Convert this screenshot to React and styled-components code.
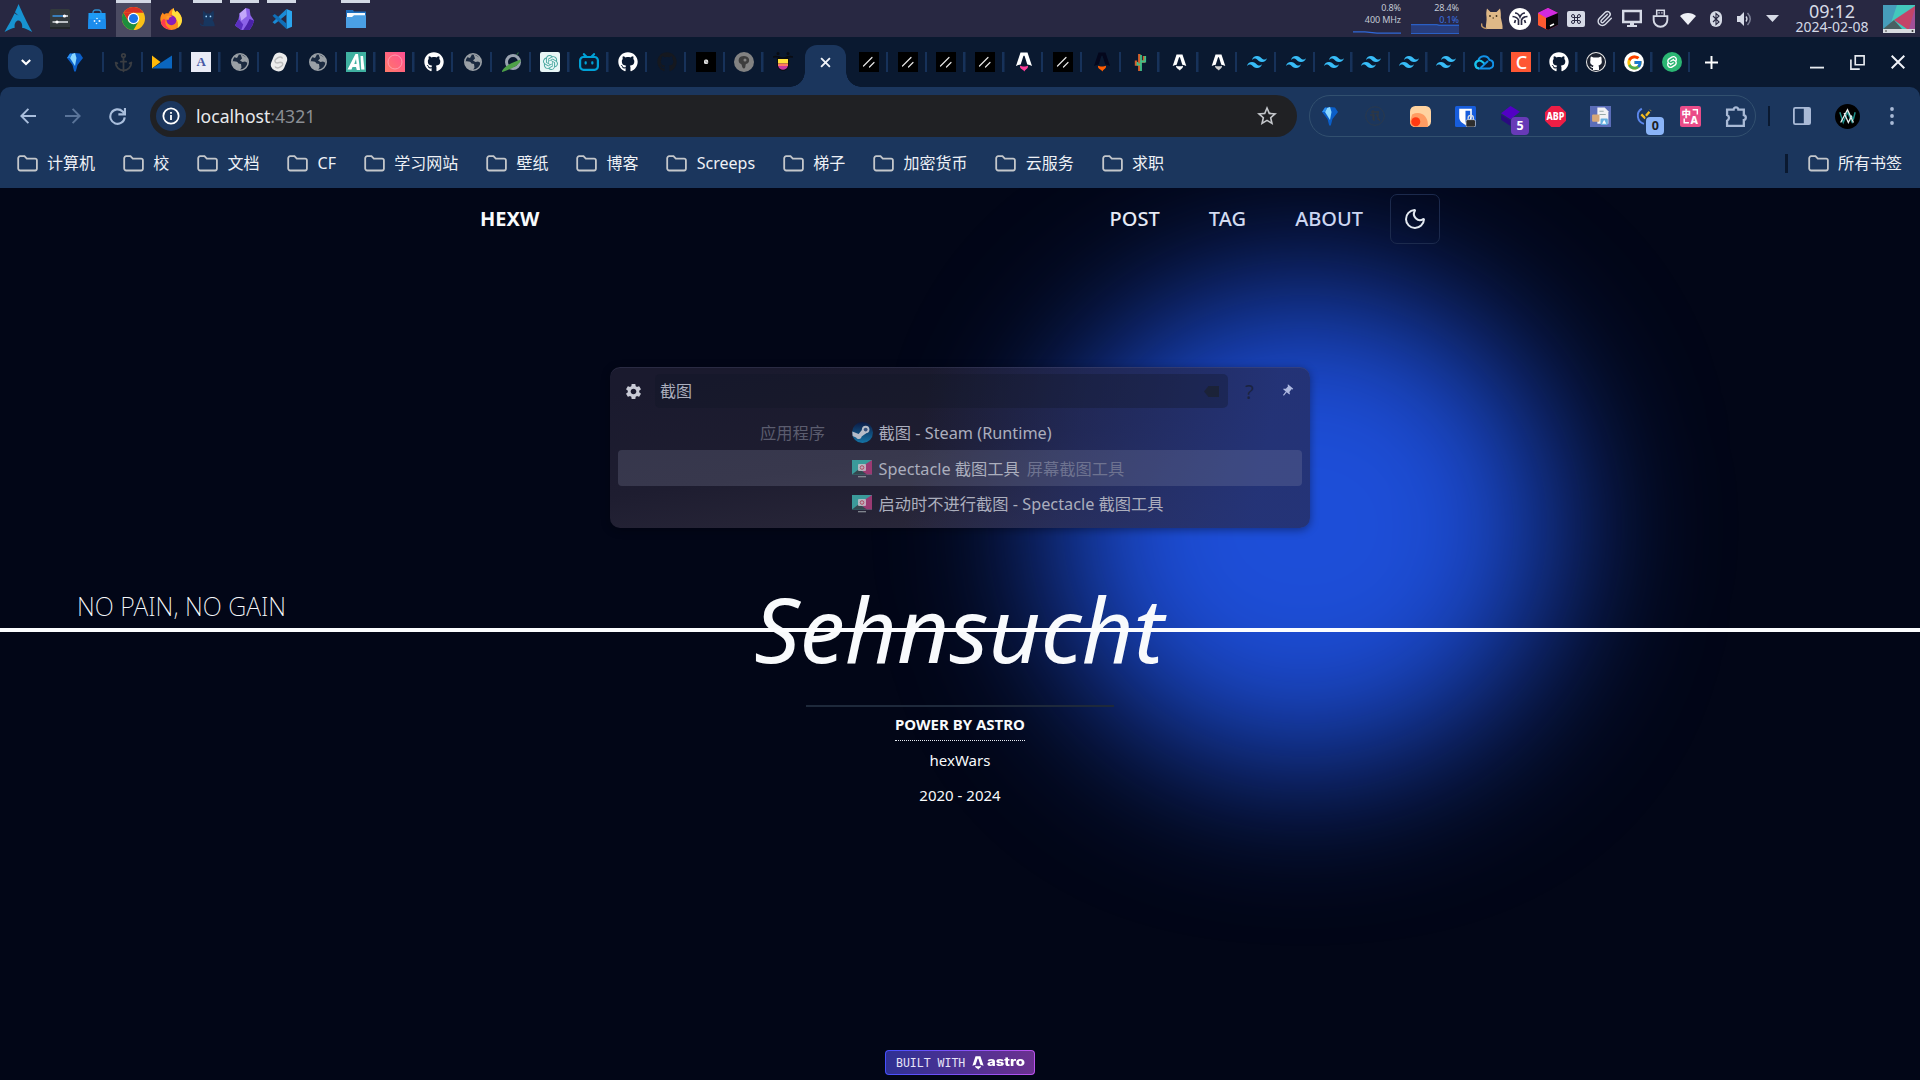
import React from "react";
import styled, { createGlobalStyle, css } from "styled-components";
import { FaGithub } from "react-icons/fa";
import { SiTailwindcss, SiSvelte, SiBilibili, SiOpenai } from "react-icons/si";
import { FcGoogle } from "react-icons/fc";
import { MdStarBorder, MdSettings, MdPushPin } from "react-icons/md";
import { Anchor, Moon, Paperclip, Command } from "lucide-react";

const sans = `"Noto Sans", "Noto Sans CJK SC", sans-serif`;

const Reset = createGlobalStyle`
  * { box-sizing: border-box; }
  body { margin: 0; background: #020617; font-family: ${sans}; }
  svg { display: block; flex: none; }
`;

const Desktop = styled.div`
  position: relative;
  width: 1920px;
  height: 1080px;
  overflow: hidden;
  display: flex;
  flex-direction: column;
`;

/* ---------- desktop panel ---------- */
const Panel = styled.header`
  height: 37px;
  flex: none;
  display: flex;
  align-items: stretch;
  background: #282842;
  color: #d3dae3;
`;
const Launcher = styled.div`
  width: 41px;
  padding-left: 4px;
  display: flex;
  align-items: center;
`;
const Task = styled.div`
  width: 37px;
  display: flex;
  justify-content: center;
  background: linear-gradient(#d3d9e5, #d3d9e5) center top / ${(p) => (p.$active ? 35 : p.$open ? 29 : 0)}px 3px no-repeat,
    linear-gradient(#4b4b62, #4b4b62) center / ${(p) => (p.$active ? 35 : 0)}px 100% no-repeat;
  align-items: center;
`;
const Spacer = styled.div`
  flex: 1;
`;
const Monitor = styled.div`
  width: 58px;
  display: flex;
  flex-direction: column;
  align-items: flex-end;
  padding-top: 2px;
  font-size: 9px;
  line-height: 12px;
  letter-spacing: -0.1px;
  color: #c3c8d4;
  position: relative;
  white-space: nowrap;
  svg { position: absolute; right: 0; bottom: 3px; z-index: 0; }
`;
const Reading = styled.span`
  position: relative;
  z-index: 1;
  color: ${(p) => p.$color || "inherit"};
`;
const Tray = styled.div`
  display: flex;
  margin-left: 19px;
`;
const TrayItem = styled.div`
  width: 28px;
  display: flex;
  align-items: center;
  justify-content: center;
`;
const Clock = styled.div`
  width: 92px;
  display: flex;
  flex-direction: column;
  align-items: center;
  padding-top: 2px;
  color: #d5dae6;
  white-space: nowrap;
`;
const Time = styled.span`
  font-size: 18px;
  line-height: 19px;
`;
const Day = styled.span`
  font-size: 14px;
  line-height: 12px;
`;
const Pager = styled.div`
  width: 42px;
  padding-left: 5px;
  display: flex;
  align-items: center;
`;

/* ---------- browser chrome ---------- */
const TabStrip = styled.div`
  height: 50px;
  flex: none;
  display: flex;
  background: #0a1930;
  padding: 0 1px 0 8px;
`;
const TabSearch = styled.button`
  width: 35px;
  height: 34px;
  margin: 8px 3px 0 0;
  padding: 0;
  border: 0;
  border-radius: 12px;
  background: #1b365d;
  display: flex;
  align-items: center;
  justify-content: center;
`;
const Tab = styled.div`
  width: ${(p) => p.$w}px;
  flex: none;
  display: flex;
  align-items: center;
  justify-content: center;
  background: ${(p) => (p.$bare ? "none" : "linear-gradient(#17325a, #17325a) right 15px / 2.5px 20px no-repeat")};
`;
const ActiveTab = styled.div`
  position: relative;
  width: 46.8px;
  flex: none;
  padding: 7.5px 3.4px 0 2.4px;
  &::before, &::after {
    content: "";
    position: absolute;
    bottom: 0;
    width: 15px;
    height: 15px;
  }
  &::before { left: -12.5px; background: radial-gradient(circle at 0 0, transparent 14.5px, #1b365d 15px); }
  &::after { right: -11.5px; background: radial-gradient(circle at 100% 0, transparent 14.5px, #1b365d 15px); }
`;
const ActiveBody = styled.div`
  height: 100%;
  border-radius: 12px 12px 0 0;
  background: #1b365d;
  display: flex;
  align-items: flex-start;
  justify-content: center;
  padding-top: 12px;
`;
const WindowButton = styled.div`
  width: ${(p) => p.$w || 40}px;
  display: flex;
  align-items: center;
  justify-content: center;
`;
const Toolbar = styled.div`
  height: 58px;
  flex: none;
  display: flex;
  align-items: center;
  background: #1b365d;
  border-radius: 10px 10px 0 0;
  padding-left: 5px;
`;
const ToolbarBack = styled.div`
  background: #0a1930;
  flex: none;
`;
const NavButton = styled.div`
  width: 45px;
  display: flex;
  justify-content: center;
`;
const Omnibox = styled.div`
  width: 1147px;
  height: 42px;
  margin-left: 10px;
  border-radius: 21px;
  background: #202124;
  display: flex;
  align-items: center;
  padding: 0 18px 0 6px;
`;
const SiteInfo = styled.div`
  width: 30px;
  height: 30px;
  border-radius: 50%;
  background: #1b365d;
  display: flex;
  align-items: center;
  justify-content: center;
`;
const Address = styled.div`
  flex: 1;
  padding: 0 0 0 10px;
  font-size: 17.6px;
  line-height: 24px;
  color: #e8eaed;
`;
const Port = styled.span`
  color: #8b8f94;
`;
const Extensions = styled.div`
  width: 447px;
  height: 42px;
  margin-left: 12px;
  border: 1.5px solid #32506f;
  border-radius: 21px;
  display: flex;
  align-items: center;
  flex: none;
`;
const Extension = styled.div`
  width: 45.1px;
  margin-left: ${(p) => (p.$first ? "-2.4px" : "0")};
  height: 28px;
  flex: none;
  display: flex;
  align-items: center;
  justify-content: center;
  position: relative;
`;
const Badge = styled.span`
  position: absolute;
  left: 23px;
  top: 15px;
  width: 18px;
  height: 18px;
  border-radius: 4px;
  background: ${(p) => p.$bg};
  color: ${(p) => p.$fg};
  font-size: 12.5px;
  font-weight: 700;
  line-height: 18px;
  text-align: center;
`;
const ToolDivider = styled.div`
  width: 2px;
  height: 20px;
  margin-left: 12px;
  background: #0a1930;
`;
const ToolItem = styled.div`
  width: 45px;
  margin-left: ${(p) => p.$ml || 0}px;
  display: flex;
  justify-content: center;
`;
const Avatar = styled.div`
  width: 25px;
  height: 25px;
  border-radius: 50%;
  background: #000;
  display: flex;
  align-items: center;
  justify-content: center;
`;
const Bookmarks = styled.div`
  height: 43px;
  flex: none;
  display: flex;
  align-items: center;
  gap: 27.8px;
  background: #1b365d;
  padding: 0 18px 7px 16.6px;
`;
const Bookmark = styled.div`
  display: flex;
  align-items: center;
  gap: 9.4px;
  font-size: 16px;
  line-height: 22px;
  color: #eef1f6;
  white-space: nowrap;
`;
const BookmarkDivider = styled.div`
  width: 3px;
  height: 19px;
  margin-right: -8px;
  background: #0a1930;
`;

/* ---------- page ---------- */
const Page = styled.main`
  position: relative;
  flex: 1;
  overflow: hidden;
  display: flex;
  flex-direction: column;
  align-items: center;
  background: #020617;
  color: #f8fafc;
`;
const Glow = styled.div`
  position: absolute;
  left: 1050px;
  top: 96px;
  width: 510px;
  height: 484px;
  border-radius: 50%;
  background: #1d4ed8;
  filter: blur(77px);
`;
const SiteHeader = styled.div`
  position: relative;
  width: 960px;
  height: 62px;
  display: flex;
  align-items: center;
`;
const Brand = styled.span`
  flex: 1;
  font-size: 20px;
  font-weight: 700;
  line-height: 28px;
`;
const Links = styled.nav`
  display: flex;
  gap: 49.2px;
  margin-right: 27px;
`;
const NavLink = styled.a`
  font-size: 20px;
  font-weight: 500;
  line-height: 28px;
  color: ${(p) => p.$color};
`;
const ThemeButton = styled.button`
  width: 50px;
  height: 50px;
  padding: 0;
  border: 1px solid #1c2a4d;
  border-radius: 7px;
  background: transparent;
  color: #e2e8f0;
  display: flex;
  align-items: center;
  justify-content: center;
`;
const Hero = styled.section`
  position: relative;
  width: 100%;
  height: 120px;
  margin-top: 320px;
  display: grid;
  & > * { grid-area: 1 / 1; }
`;
const Motto = styled.p`
  margin: 0;
  padding: 21px 0 0 77px;
  font-size: 25px;
  line-height: 30px;
  font-weight: 200;
`;
const Rule = styled.div`
  align-self: center;
  height: 4px;
  background: #fcfdff;
`;
const Title = styled.h1`
  margin: 0;
  padding-right: 2px;
  justify-self: center;
  font-size: 90.3px;
  line-height: 116px;
  font-weight: 440;
  font-style: italic;
`;
const SiteFooter = styled.footer`
  position: relative;
  width: 308px;
  margin-top: 15px;
  border-top: 2px solid #1e293b;
  display: flex;
  flex-direction: column;
  align-items: center;
  font-size: 15px;
`;
const PoweredBy = styled.a`
  height: 34px;
  padding-top: 4px;
  line-height: 26px;
  font-weight: 700;
  border-bottom: 1px dotted #e8ecf4;
`;
const FooterText = styled.span`
  margin-top: ${(p) => p.$mt}px;
  line-height: 24px;
`;
const AstroBadge = styled.div`
  position: relative;
  width: 150px;
  height: 25px;
  margin-top: auto;
  margin-bottom: 5px;
  border: 1px solid transparent;
  border-radius: 4px;
  background: linear-gradient(90deg, #2f3194, #6b3190) padding-box, linear-gradient(90deg, #4550ff, #bc52ee) border-box;
  display: flex;
  align-items: center;
  padding-left: 10px;
`;
const BadgeMono = styled.span`
  width: 75px;
  font-family: "DejaVu Sans Mono", monospace;
  font-size: 11.5px;
  line-height: 14px;
  color: #e6e2f6;
  white-space: nowrap;
`;
const BadgeWord = styled.span`
  margin-left: 2px;
  padding-bottom: 1px;
  font-family: Inter, sans-serif;
  font-size: 12.4px;
  line-height: 14px;
  font-weight: 800;
  color: #fff;
  transform: scaleX(1.2);
  transform-origin: left;
`;

/* ---------- launcher window ---------- */
const Runner = styled.div`
  position: absolute;
  left: 610px;
  top: 367px;
  width: 700px;
  height: 161px;
  border-radius: 10px;
  padding: 7px 8px 0;
  background: linear-gradient(100deg, rgba(36, 50, 118, 0) 44%, rgba(36, 50, 118, 0.55) 66%, rgba(36, 52, 122, 0.95) 92%),
    linear-gradient(172deg, #1a1a2e 10%, #1e1d30 50%, #312e40 100%);
  box-shadow: 0 2px 8px rgba(0, 0, 10, 0.4), inset 0 1px 0 rgba(140, 150, 200, 0.14);
  color: #abaebd;
  font-size: 16.25px;
`;
const SearchRow = styled.div`
  display: flex;
  align-items: center;
  height: 34px;
`;
const Slot = styled.div`
  width: ${(p) => p.$w}px;
  display: flex;
  justify-content: center;
  font-size: 20px;
  color: ${(p) => p.$color};
`;
const SearchField = styled.div`
  width: 573px;
  height: 34px;
  border-radius: 5px;
  background: rgba(16, 22, 36, 0.32);
  display: flex;
  align-items: center;
  justify-content: space-between;
  padding: 0 9px 0 5px;
  font-size: 16px;
  line-height: 24px;
`;
const Results = styled.div`
  margin-top: 6.5px;
`;
const Result = styled.div`
  height: 35.5px;
  display: flex;
  align-items: center;
  border-radius: 4px;
  ${(p) => p.$selected && css`background: rgba(150, 155, 180, 0.22);`}
`;
const Category = styled.span`
  width: 207px;
  text-align: right;
  color: #5b5c6e;
`;
const ResultIcon = styled.div`
  width: 20px;
  margin: 0 6.6px 0 27px;
  display: flex;
  justify-content: center;
`;
const Hint = styled.span`
  margin-left: 7px;
  color: #6e7390;
`;

/* ---------- artwork ---------- */
const Svg = ({ s = 20, vb = 20, w, h, children }) => (
  <svg width={w || s} height={h || s} viewBox={typeof vb === "number" ? `0 0 ${vb} ${vb}` : vb} fill="none">
    {children}
  </svg>
);

const Arch = () => (
  <Svg s={29} vb={28}>
    <path d="M14 0c-1.200 3-2 5-3.400 8 .9.900 1.900 2 3.600 3.200-1.800-.7-3-1.500-4-2.300C8.500 12.800 5.500 18.300.5 27c3.900-2.200 7-3.600 9.900-4.100a7 7 0 0 1-.2-1.700c.1-3 1.800-5.400 3.900-5.200 2 .2 3.600 2.800 3.500 5.800 0 .5-.1.800-.2 1.200 2.900.6 5.900 1.900 9.900 4.100C21.500 17 18 9 14 0z" fill="#1793d1" />
  </Svg>
);
const Sliders = () => (
  <Svg>
    <rect width="20" height="20" rx="1.500" fill="#333a3d" />
    <rect y="18" width="20" height="2" fill="#22272a" />
    <path d="M2.500 7h12" stroke="#3d9cf0" strokeWidth="1.400" /><path d="M13 7h5M7 13h11" stroke="#e8ecee" strokeWidth="1.400" /><path d="M2.500 13h4" stroke="#e8ecee" strokeWidth="1.400" />
    <circle cx="14.500" cy="7" r="1.600" fill="#fff" /><circle cx="7" cy="13" r="1.600" fill="#fff" />
  </Svg>
);
const Bag = () => (
  <Svg>
    <path d="M6 6V3.500A2.500 2.500 0 0 1 8.500 1h3A2.500 2.500 0 0 1 14 3.500V6" stroke="#2f8fd0" strokeWidth="1.300" />
    <path d="M1.500 4h17l.5 16H1z" fill="#1e9bf5" /><path d="M1.300 10h17.400L19 20H1z" fill="#1a86ea" opacity=".7" />
    <g fill="#e8f4ff"><circle cx="7.500" cy="12" r=".9" /><circle cx="10" cy="9.500" r=".8" /><circle cx="12.500" cy="12" r="1.100" /><circle cx="9.500" cy="14.500" r=".8" /></g>
  </Svg>
);
const Chrome = () => (
  <Svg s={23} vb={24}>
    <circle cx="12" cy="12" r="12" fill="#fbc116" />
    <path d="M1.600 6A12 12 0 0 1 22.400 6H12z" fill="#d93025" />
    <path d="M1.600 6A12 12 0 0 0 12 24l5.200-9H6.800z" fill="#1e8e3e" />
    <path d="M1.600 6 6.800 15 12 6z" fill="#d93025" />
    <circle cx="12" cy="12" r="6" fill="#fff" /><circle cx="12" cy="12" r="4.700" fill="#1a73e8" />
  </Svg>
);
const Firefox = () => (
  <Svg s={22} vb={24}>
    <path d="M3 5c.5 1 1 1.500 1.500 2C6 5.500 8 5.500 9 6c2-4 4-5 6-6 0 2 .5 3 2.500 5 0-1 .5-1.500 1-2 3 3 5.500 6 5.500 10.500A11.700 11.700 0 0 1 12 24 11.800 11.800 0 0 1 .3 12.500C.3 9 1.500 7 3 5z" fill="#ff8a1c" />
    <path d="M15 0c0 2 .5 3 2.500 5 0-1 .5-1.500 1-2 3 3 5.500 6 5.500 10.500-.2 4-2.500 7-5 8.500 2-6-.5-10-4-12-2-1-3-6 0-10z" fill="#ffde3c" />
    <path d="M1 16c2 6 8 8 13 7.500C8 23 5 18 6 13c-2-2-3-1-5 3z" fill="#ff3b50" />
    <circle cx="12.500" cy="13.500" r="5.300" fill="#8a1fb8" />
    <path d="M7 9c2-1.500 5-1 6 .5-1.500.5-3 .5-3.200 2.200 0 1.500-2 1.500-2.800.8z" fill="#ff9a2c" />
  </Svg>
);
const DarkCat = () => (
  <Svg s={17} vb={20}>
    <path d="M5 19c0-3 .5-5 1-7-2-2-1.500-7-1-11.500L8.500 4h4.500l4-3.500c.8 4.500 1 9-1 11.500 1.500 2 2.500 4 2.500 7z" fill="#17365f" />
    <circle cx="8.500" cy="7.500" r="1" fill="#9fd0f8" /><circle cx="13.500" cy="7.500" r="1" fill="#9fd0f8" />
    <path d="M6 18.300c-4 .5-4.500-2-5-2" stroke="#17365f" strokeWidth="1.500" />
  </Svg>
);
const TanCat = () => (
  <Svg s={22} vb={22}>
    <path d="M5 21C4.500 16 6 13 5.500 9 5 6 5.300 3 6 .5L9.500 4h6L19 .5c.8 3 1 6 .8 9 .8 4 2.200 8 1.700 11.500z" fill="#deb887" />
    <path d="M6 20.500C2 20.500 0 18 .8 15.500" stroke="#c49a68" strokeWidth="1.500" />
    <circle cx="9" cy="8" r=".9" fill="#3a2a18" /><circle cx="15.500" cy="8" r=".9" fill="#3a2a18" /><path d="M11.500 10h1.500" stroke="#3a2a18" />
  </Svg>
);
const Obsidian = () => (
  <Svg s={22} vb={24}>
    <path d="M13 0 6 6l-1 6-4 7 7 5h9l3-5 2-5-4-6-1-7z" fill="#8b62e8" />
    <path d="m13 0-7 6 2 8 6-5z" fill="#c3a8fa" /><path d="m5 12 5 6-2 6-7-5z" fill="#5a2fc0" /><path d="m17 12 5 2-2 5-3 5h-7l4-6z" fill="#4a22a8" />
  </Svg>
);
const Code = () => (
  <Svg s={20} vb={20}>
    <path d="M14.500 0 20 2.300v15.400L14.500 20z" fill="#2ba5ee" />
    <path d="M14.500 0v5.500L2.800 15 .5 13.300z" fill="#1a8ad6" /><path d="M14.500 20v-5.500L2.800 5 .5 6.700z" fill="#0f6fb8" />
  </Svg>
);
const FolderApp = () => (
  <Svg w={20} h={18} vb="0 0 20 18">
    <path d="M0 0h7l1 1.500h12V17H0z" fill="#1e6fbe" /><path d="M1 3h18v4H1z" fill="#f5f9fd" /><path d="M0 7h6l2-1.700h12V18H0z" fill="#4a9fe4" />
  </Svg>
);

const Diamond = ({ s = 20 }) => (
  <Svg s={s}>
    <path d="M2 6 5 1.500 10 1l5 .5L18 6l-5.500 7-1.700 6.500H9.200L7.500 13z" fill="#0a5ec8" /><path d="M5 6 7 2l3-1 1.500 5L10 14z" fill="#8bd8ff" /><path d="M2 6l3-4.500L7 2 5 6z" fill="#2b8ef0" />
  </Svg>
);
const MailMark = () => (
  <Svg><path d="M0 3.500 8.500 10 0 16.500z" fill="#ffb90a" /><path d="M20 3.500v13H0z" fill="#0a66c0" /></Svg>
);
const Letter = styled.div`
  width: 20px;
  height: 20px;
  background: ${(p) => p.$bg};
  color: ${(p) => p.$fg};
  font: ${(p) => p.$weight || 500} ${(p) => p.$size || 14}px/20px ${(p) => p.$family || sans};
  text-align: center;
`;
const Globe = () => (
  <Svg s={18} vb={18}>
    <circle cx="9" cy="9" r="8.200" fill="#1b2a40" stroke="#9aa0a6" strokeWidth="1.600" />
    <path d="M9.500 1 16 5l.9 5-2.900-1.500-2.500.5L9 7.500 11 5.500z" fill="#9aa0a6" /><path d="M1 8.500c4-.5 5.500.5 6.500 2l2.500.5.5 3.500L9 17C4 17 1 13.500 1 8.500z" fill="#9aa0a6" /><path d="m3 4 3 1 2-3.500C6 1.500 4 2.500 3 4z" fill="#9aa0a6" />
  </Svg>
);
const SvelteLight = () => (
  <Svg>
    <rect x="3" y=".6" width="14" height="18.800" rx="6" transform="rotate(22 10 10)" fill="#ececec" />
    <path d="M13.500 6.500c-1-2-3-1.800-4.500-.8L7 7c-2 1.500-1 4 1.200 4l3.300-.8c2.500 0 3 2.800 1 4l-2 1.200c-2 1-3.800.5-4.300-1" stroke="#bdbdbd" strokeWidth="1.500" />
  </Svg>
);
const AnimeA = () => (
  <Svg><rect width="20" height="20" fill="#3fb0a0" /><path d="M9.500 2 1.500 17.500h4l1-2.500H10l.8 3H14L12 2zM8.300 12l1.700-5 .6 5z" fill="#fff" /><path d="M14.500 4H17l1.500 13.500h-3.300z" fill="#fff" /></Svg>
);
const PinkRing = () => (
  <Svg><defs><linearGradient id="pk" x1="0" y1="1" x2="1" y2="0"><stop stopColor="#ff7a68" /><stop offset="1" stopColor="#ff4f92" /></linearGradient></defs><rect width="20" height="20" fill="url(#pk)" /><circle cx="10" cy="10" r="7" stroke="#ff9cae" strokeWidth="1" /></Svg>
);
const Planet = () => (
  <Svg><circle cx="11" cy="10" r="6.500" stroke="#9aa3b0" strokeWidth="3" /><path d="M1.500 18.500C6 17 15 14 18 8.500c-3 2-13 4-16.500 10z" fill="#4ea048" stroke="#4ea048" strokeWidth="2" /><path d="m14.500 3 2-2.500" stroke="#2f7040" strokeWidth="1.200" /></Svg>
);
const OpenAi = styled.div`
  width: 20px;
  height: 20px;
  border-radius: 2px;
  background: #e8f6f6;
  color: #48a8a0;
  display: flex;
  align-items: center;
  justify-content: center;
`;
const DotSquare = () => (<Svg><rect width="20" height="20" fill="#000" /><rect x="8" y="7.500" width="4.200" height="4.500" rx="1.500" fill="#ddd" /><path d="m9 8.500 2.500 2.500" stroke="#777" strokeWidth=".8" /></Svg>);
const GrayFace = () => (<Svg><circle cx="10" cy="10" r="10" fill="#828282" /><path d="M5 6.500C7 3 14 3.500 15 7c.6 3-1 4.500-3 5-1 1.500 0 4-2 4.500C7.500 16 8.500 13 7 12c-2-.5-3-3-2-5.500z" fill="#3d3d3d" /><circle cx="11" cy="8" r="1.500" fill="#828282" /></Svg>);
const Tongue = () => (<Svg><path d="M0 5q4-1 8 1h4q4-2 8-1" stroke="#0a0c12" strokeWidth="1.600" /><circle cx="5" cy="1.500" r="1.500" fill="#0a0c12" /><circle cx="15" cy="1.500" r="1.500" fill="#0a0c12" /><path d="M4 6h12v6c0 9-12 9-12 0z" fill="#0a0c12" /><path d="M5 7h10v4.500H5z" fill="#ffe03a" /><path d="M5 11.500h10v2.500H5z" fill="#ff7a62" /><path d="M5.200 14h9.600c-1 5-8.600 5-9.600 0z" fill="#c83aa0" /></Svg>);
const Slashes = () => (<Svg><rect width="20" height="20" fill="#000" /><path d="M4.500 14 13 5.500M10.500 15 15 10.500" stroke="#e6e6e6" strokeWidth="1.200" strokeLinecap="round" /></Svg>);
const AstroMark = ({ a = "#fff", f = "#ff3d9a", s = 20 }) => (
  <Svg s={s}><path d="M6.500.5h7L18 14c-1.500-.8-3-1.200-4.700-1.500L10.700 4.300c-.2-.6-1.200-.6-1.400 0l-2.600 8.200C5 12.800 3.500 13.200 2 14z" fill={a} /><path d="M6 13.800c2 1 6 1 8 0 .3 2-.8 3-2 3.700-.8.400-1.200 1.100-1.500 2-.6-.8-1-1.300-2.300-2C6.600 16.600 5.800 15.500 6 13.800z" fill={f} /></Svg>
);
const Cactus = () => (<Svg><path d="M9.300 19V2M9.300 12.500H6V8.500M9.300 9.500H14V4" stroke="#d4602a" strokeWidth="2.400" /><path d="M11 19V3M11 12.500H7.500V10M11 9.500h4.200V4" stroke="#3fc08a" strokeWidth="1.800" /></Svg>);
const Cloud = () => (<Svg><path d="M5 16.500a4 4 0 0 1-.8-7.800A6 6 0 0 1 15.500 8a4.300 4.300 0 0 1 .2 8.500z" stroke="#1292e8" strokeWidth="2" /><path d="M5 16.500a4 4 0 0 1-.8-7.800c2-.7 3.500.3 5 1.800l1.500 1.500" stroke="#18c4e8" strokeWidth="2" /><path d="m6.500 16 7.500-7" stroke="#1292e8" strokeWidth="1.800" /></Svg>);
const Disc = styled.div`
  width: 20px;
  height: 20px;
  border-radius: 50%;
  background: ${(p) => p.$bg};
  color: ${(p) => p.$fg};
  box-shadow: ${(p) => (p.$ring ? `inset 0 0 0 1px ${p.$ring}` : "none")};
  display: flex;
  align-items: center;
  justify-content: center;
`;
const KeyTile = styled.div`
  width: 18px;
  height: 16px;
  border-radius: 2px;
  background: #d6dae6;
  color: #282842;
  display: flex;
  align-items: center;
  justify-content: center;
`;
const Steam = () => (
  <Svg s={21}>
    <defs><linearGradient id="st" x1="0" y1="0" x2="0" y2="1"><stop stopColor="#0c1a44" /><stop offset="1" stopColor="#1474a6" /></linearGradient></defs>
    <circle cx="10" cy="10" r="10" fill="url(#st)" />
    <circle cx="13" cy="7.200" r="3.600" fill="#b6bcc8" /><circle cx="13" cy="7.200" r="1.800" fill="#34507c" />
    <path d="m.3 9 6 2.400L10 7l3.500 3.800-4.300 2.900a2.800 2.800 0 0 1-5.300 1L.6 13.300z" fill="#b6bcc8" />
  </Svg>
);

const FolderIcon = () => (
  <Svg w={21} h={17} vb="0 0 21 17"><path d="M1.200 3.200a2 2 0 0 1 2-2h4.300L9.800 3.700h8.400a1.700 1.700 0 0 1 1.700 1.700v8.400a1.700 1.700 0 0 1-1.700 1.700H3.200a2 2 0 0 1-2-2z" stroke="#c4c7cb" strokeWidth="1.800" /></Svg>
);
const Line = ({ s = 20, d, c = "#fff", sw = 2 }) => (<Svg s={s}><path d={d} stroke={c} strokeWidth={sw} /></Svg>);
const Scene = () => (
  <Svg w={32} h={28} vb="0 0 32 28">
    <rect width="32" height="28" fill="#43c8bc" /><path d="M0 0h14L8 18l-8 6z" fill="#469dbb" /><path d="M32 1v23H24L11 15z" fill="#c44468" /><path d="M32 3v21h-6z" fill="#a14f98" /><path d="m0 24 11-9 8 9z" fill="#4a6062" /><rect y="24" width="32" height="4" fill="#d8dce0" /><circle cx="3" cy="26" r=".8" fill="#333" /><circle cx="29.500" cy="26" r="1" fill="#333" />
  </Svg>
);
const Spectacle = () => (
  <Svg>
    <path d="M0 2h20v14.500H0z" fill="#3b9a9a" /><path d="M20 2v14.500h-8L9 9z" fill="#9a3a72" /><path d="m0 16.500 7-5.500 8 5.500z" fill="#34474f" />
    <rect x="6" y="6" width="8" height="7" rx="1" fill="#c7bfc9" opacity=".85" /><circle cx="10" cy="9.500" r="1.800" stroke="#b04a62" /><path d="M6 18.700h8" stroke="#8a9098" strokeWidth="1.200" />
  </Svg>
);

const gh = <FaGithub size={20} color="#fff" />;
const tw = <SiTailwindcss size={20} color="#38bdf8" />;
const leftTabs = [
  <Anchor size={21} color="#3a3d42" />, <MailMark />,
  <Letter $bg="#e9ebf6" $fg="#4757a4" $size={13} $weight={700} $family={`"Liberation Serif", serif`}>A</Letter>,
  <Globe />, <SvelteLight />, <Globe />, <AnimeA />, <PinkRing />, gh, <Globe />, <Planet />,
  <OpenAi><SiOpenai size={15} /></OpenAi>, <SiBilibili size={20} color="#00a1d6" />, gh,
  <FaGithub size={20} color="#15181f" />, <DotSquare />, <GrayFace />, <Tongue />,
];
const midTabs = [
  <Slashes />, <Slashes />, <Slashes />, <Slashes />, <AstroMark />, <Slashes />, <AstroMark a="#04071c" f="#ff5d01" />,
  <Cactus />, <AstroMark s={17} f="#fff" />, <AstroMark s={17} f="#d0d0d0" />, tw, tw,
];
const rightTabs = [
  tw, tw, tw, tw, <Cloud />,
  <Letter $bg="#ff5733" $fg="#fff" $size={18}>C</Letter>, gh,
  <Disc $bg="#1c2230" $fg="#fff" $ring="#e8e8e8">
    <Svg s={16} vb={16}><path d="M3 2.500 5.500 3.500h5L13 2.500c.7 1.500.7 2.500.5 3.500 1 3-.5 5-3 5.500.6 1 .5 3 .5 4.500H5v-2c-2 .3-2-1.500-3-2 1.500-.3 1.500 1 3 1 0-.6.200-1 .5-1.500C3 11 1.500 9 2.500 6c-.2-1-.2-2 .5-3.500z" fill="#fff" /></Svg>
  </Disc>,
  <Disc $bg="#fff"><FcGoogle size={17} /></Disc>,
  <Disc $bg="#2bb673" $fg="#fff"><SiSvelte size={12} /></Disc>,
];
const bookmarks = ["计算机", "校", "文档", "CF", "学习网站", "壁纸", "博客", "Screeps", "梯子", "加密货币", "云服务", "求职"];

const ink = "#d6dae6";
const tray = [
  <TanCat />,
  <Svg s={22} vb={22}><circle cx="11" cy="11" r="11" fill="#fff" /><path d="M3.500 8.500c3 .2 5 1 6 3.500v5M18.500 8.500c-3 .2-5 1-6 3.500v5M6 5c2.500 0 4 1.500 5 4 1-2.500 2.500-4 5-4M6.500 12l-1 3M15.500 12l1 3" stroke="#282842" strokeWidth="1.700" /></Svg>,
  <Svg s={22} vb={22}><path d="m11 0 10 5v12l-10 5L1 17V5z" fill="#f72a8c" /><path d="m1 5 10 5v12L1 17z" fill="#ff5a30" /><path d="m1 5 10-5 10 5-10 6z" fill="#d02ae0" /><path d="m9 10 12-5v12l-10 5-2-1z" fill="#08060a" /><path d="m13 18 4-2" stroke="#fff" strokeWidth="1.500" /></Svg>,
  <KeyTile><Command size={12} /></KeyTile>,
  <Paperclip size={17} color={ink} />,
  <Svg><path d="M1.200 2h17.600v11H1.200z" stroke={ink} strokeWidth="2.400" /><path d="M8 13h4v3h3v2H5v-2h3z" fill={ink} /></Svg>,
  <Svg s={19}><path d="M6 7V1.200h8V7" stroke={ink} strokeWidth="1.600" /><path d="M8.500 3v2M11.500 3v2" stroke={ink} /><path d="M2.800 7.500h14.400v4a7.200 7.200 0 0 1-14.400 0z" stroke={ink} strokeWidth="2" /></Svg>,
  <Svg w={16} h={12} vb="0 0 16 12"><path d="M8 12 0 3c4-4 12-4 16 0z" fill="#eef0f6" /></Svg>,
  <Svg w={12} h={16} vb="0 0 12 16"><rect width="12" height="16" rx="6" fill={ink} /><path d="m3 5 6 6-3 2.500v-11L9 5l-6 6" stroke="#282842" strokeWidth="1.100" /></Svg>,
  <Svg s={16} vb={16}><path d="M1 5h3l4-4v14l-4-4H1z" fill={ink} /><path d="M10 5.500q2 2.500 0 5" stroke={ink} strokeWidth="1.300" /><path d="M11.500 2q5.500 6 0 12" stroke="#7d8096" strokeWidth="1.500" /></Svg>,
  <Svg w={13} h={7} vb="0 0 13 7"><path d="M0 0h13L6.500 7z" fill={ink} /></Svg>,
];

const extensions = [
  <Diamond />,
  <Svg><circle cx="10" cy="10" r="9.300" stroke="#2b394c" /><path d="M6 6h8M5 9h4v6M11 8l4 7M8 4v10M13 5v9" stroke="#2f3844" strokeWidth="1.300" /></Svg>,
  <Svg s={21}><rect width="20" height="20" rx="5" fill="#ffd3a0" /><path d="M2 8c8-4 16 1 15 12H5a5 5 0 0 1-5-5z" fill="#ff9c62" /><circle cx="5.500" cy="15" r="4.300" fill="#ff3912" /></Svg>,
  <Svg s={21}><rect width="20" height="20" rx="1.500" fill="#175ddc" /><path d="M4 2.500h12v8c0 4-3 6-6 7.500-3-1.500-6-3.500-6-7.500z" fill="#fff" /><path d="M10 4.500h4.500v6c0 2.500-2 4-4.500 5.500z" fill="#175ddc" /><rect x="10.500" y="13" width="9" height="7" rx="1.500" fill="#2d2d2d" stroke="#ddd" strokeWidth=".6" /><path d="M12.500 13v-1.500a2.400 2.400 0 0 1 5 0V13" stroke="#ddd" strokeWidth="1.200" /></Svg>,
  <><Svg s={21}><path d="m10 0 9 5.500-9 7L1 7z" fill="#5200c4" /><path d="m1 8 9 5.500V19L1 13z" fill="#2a0a80" /></Svg><Badge $bg="#673ab7" $fg="#fff">5</Badge></>,
  <Svg s={21}><path d="M6 0h8l6 6v8l-6 6H6l-6-6V6z" fill="#ed1e45" /><text x="10" y="13.500" textAnchor="middle" fontSize="9.500" fontWeight="800" fill="#fff" fontFamily="Noto Sans" textLength="17" lengthAdjust="spacingAndGlyphs">ABP</text></Svg>,
  <Svg s={21}><rect width="20" height="20" fill="#5b6db8" /><path d="M7 1.500h7L17.500 5v12H7z" fill="#f2f2f4" /><path d="M9 5h4M9 8h6" stroke="#9aa" /><rect x="2" y="8" width="7" height="7" rx="1" fill="#d8a878" /><rect x="10" y="12" width="7" height="6" rx="1" fill="#66b0e0" /><path d="m13.500 13-2 4h4z" fill="#fff" /></Svg>,
  <><Svg s={21}><path d="M6.500 2.500a8 8 0 0 0 2 14.500" stroke="#5b86ea" strokeWidth="1.800" /><path d="m6 8 3 3 6-7" stroke="#f5bd1f" strokeWidth="2.200" strokeDasharray="5 1.500" /></Svg><Badge $bg="#8ab4f8" $fg="#202124">0</Badge></>,
  <Svg s={21}><rect width="20" height="20" rx="2" fill="#ea4c89" /><text x="1.500" y="10" fontSize="9" fontWeight="900" fill="#fff" fontFamily="Noto Sans CJK SC">中</text><text x="10" y="17.500" fontSize="10" fontWeight="800" fill="#fff" fontFamily="Noto Sans">A</text><path d="M12 3.500h4.500V8M4 12v4h4.500" stroke="#fff" strokeWidth="1.400" /></Svg>,
  <Svg s={23} vb={22}><path d="M2 4.500h6.200a2.300 2.300 0 0 1 4.600 0H18v5.200a2.400 2.400 0 0 1 0 4.700V20H2v-5a3 3 0 0 0 0-5.500z" stroke="#a9bad6" strokeWidth="2.200" /></Svg>,
];

export default function App() {
  return (
    <Desktop>
      <Reset />
      <Panel>
        <Launcher><Arch /></Launcher>
        <Task><Sliders /></Task>
        <Task><Bag /></Task>
        <Task $active $open><Chrome /></Task>
        <Task><Firefox /></Task>
        <Task $open><DarkCat /></Task>
        <Task $open><Obsidian /></Task>
        <Task $open><Code /></Task>
        <Task />
        <Task $open><FolderApp /></Task>
        <Spacer />
        <Monitor>
          <Reading>0.8%</Reading><Reading>400 MHz</Reading>
          <Svg w={48} h={3} vb="0 0 48 3"><path d="M0 .8h12l12 1.400h24" stroke="#2f68d8" strokeWidth="1.200" /></Svg>
        </Monitor>
        <Monitor>
          <Reading>28.4%</Reading><Reading $color="#3a6fe0">0.1%</Reading>
          <Svg w={48} h={10} vb="0 0 48 10"><path d="M0 0h48v10H0z" fill="#283d7c" /><path d="M0 .7h26l2 .8h20M0 9.500h48" stroke="#2a5fc4" strokeWidth="1.200" /></Svg>
        </Monitor>
        <Tray>{tray.map((icon, i) => <TrayItem key={i}>{icon}</TrayItem>)}</Tray>
        <Clock><Time>09:12</Time><Day>2024-02-08</Day></Clock>
        <Pager><Scene /></Pager>
      </Panel>

      <TabStrip>
        <TabSearch><Line s={14} c="#fff" sw={3} d="m4 7 6 6 6-6" /></TabSearch>
        <Tab $w={58.3}><Diamond /></Tab>
        {leftTabs.map((icon, i) => <Tab key={i} $w={38.8} $bare={i === leftTabs.length - 1}>{icon}</Tab>)}
        <ActiveTab><ActiveBody><Line s={11} c="#f0f3f8" sw={3.4} d="m2 2 16 16M18 2 2 18" /></ActiveBody></ActiveTab>
        {midTabs.map((icon, i) => <Tab key={i} $w={38.8}>{icon}</Tab>)}
        {rightTabs.map((icon, i) => <Tab key={i} $w={37.54}>{icon}</Tab>)}
        <WindowButton $w={42}><Line s={13} c="#fff" sw={3} d="M10 0v20M0 10h20" /></WindowButton>
        <Spacer />
        <WindowButton><Line s={14} c="#e8ebf0" sw={2.600} d="M0 18h20" /></WindowButton>
        <WindowButton><Line s={15} c="#e8ebf0" sw={2.200} d="M7 1.200h11.800V13H7zM1.200 6v12.800H13" /></WindowButton>
        <WindowButton $w={42}><Line s={14} c="#f0f3f8" sw={2.800} d="m1 1 18 18M19 1 1 19" /></WindowButton>
      </TabStrip>

      <ToolbarBack>
        <Toolbar>
          <NavButton><Line s={16} c="#a9bedc" sw={2.400} d="M20 10H2M10.500 1 1.700 10l8.800 9" /></NavButton>
          <NavButton><Line s={16} c="#5a7499" sw={2.400} d="M0 10h18M9.500 1l8.800 9-8.800 9" /></NavButton>
          <NavButton><Line s={17} c="#a9bedc" sw={2.500} d="M18.500 11A8.500 8.500 0 1 1 16 4l2.500 2.500M18.800 0v7.500H11" /></NavButton>
          <Omnibox>
            <SiteInfo><Svg s={18}><circle cx="10" cy="10" r="8.500" stroke="#fff" strokeWidth="2" /><path d="M10 9v5.500M10 5.500v2" stroke="#fff" strokeWidth="2" /></Svg></SiteInfo>
            <Address>localhost<Port>:4321</Port></Address>
            <MdStarBorder size={24} color="#c4c7cb" />
          </Omnibox>
          <Extensions>{extensions.map((icon, i) => <Extension key={i} $first={i === 0}>{icon}</Extension>)}</Extensions>
          <ToolDivider />
          <ToolItem $ml={9.500}><Svg s={18}><rect x="1" y="1" width="18" height="18" rx="1.500" stroke="#a9bad6" strokeWidth="2" /><path d="M12 1h7v18h-7z" fill="#a9bad6" /></Svg></ToolItem>
          <ToolItem><Avatar><Svg s={17}><path d="m1 5 4 12 5-12 6 13M14 9l3 4 2-8" stroke="#1f8f8a" strokeWidth="1.700" /><path d="m2 17 8-15 7 15M6 6l5 11 4-8" stroke="#e8f0f0" strokeWidth="1.500" /></Svg></Avatar></ToolItem>
          <ToolItem><Svg w={4} h={18} vb="0 0 4 18"><g fill="#a9bad6"><circle cx="2" cy="2" r="1.900" /><circle cx="2" cy="9" r="1.900" /><circle cx="2" cy="16" r="1.900" /></g></Svg></ToolItem>
        </Toolbar>
      </ToolbarBack>

      <Bookmarks>
        {bookmarks.map((name) => <Bookmark key={name}><FolderIcon />{name}</Bookmark>)}
        <Spacer />
        <BookmarkDivider />
        <Bookmark><FolderIcon />所有书签</Bookmark>
      </Bookmarks>

      <Page>
        <Glow />
        <SiteHeader>
          <Brand>HEXW</Brand>
          <Links>
            <NavLink $color="#e6eaf5">POST</NavLink>
            <NavLink $color="#d3dbf0">TAG</NavLink>
            <NavLink $color="#ccd6f2">ABOUT</NavLink>
          </Links>
          <ThemeButton><Moon size={24} strokeWidth={2} /></ThemeButton>
        </SiteHeader>
        <Hero>
          <Motto>NO PAIN, NO GAIN</Motto>
          <Title>Sehnsucht</Title>
          <Rule />
        </Hero>
        <SiteFooter>
          <PoweredBy>POWER BY ASTRO</PoweredBy>
          <FooterText $mt={7}>hexWars</FooterText>
          <FooterText $mt={11}>2020 - 2024</FooterText>
        </SiteFooter>
        <AstroBadge>
          <BadgeMono>BUILT WITH</BadgeMono>
          <AstroMark s={14} f="#fff" />
          <BadgeWord>astro</BadgeWord>
        </AstroBadge>
      </Page>

      <Runner>
        <SearchRow>
          <Slot $w={31} $color="#c9cbd6"><MdSettings size={19} /></Slot>
          <Spacer />
          <SearchField>截图<Svg w={15} h={11} vb="0 0 15 11"><path d="M0 5.500 4.500 0H15v11H4.500z" fill="#1b2238" /></Svg></SearchField>
          <Slot $w={43} $color="#1b2340">?</Slot>
          <Slot $w={31} $color="#aeb9e0"><MdPushPin size={14} style={{ transform: "rotate(40deg)" }} /></Slot>
        </SearchRow>
        <Results>
          <Result><Category>应用程序</Category><ResultIcon><Steam /></ResultIcon>截图 - Steam (Runtime)</Result>
          <Result $selected><Category /><ResultIcon><Spectacle /></ResultIcon>Spectacle 截图工具<Hint>屏幕截图工具</Hint></Result>
          <Result><Category /><ResultIcon><Spectacle /></ResultIcon>启动时不进行截图 - Spectacle 截图工具</Result>
        </Results>
      </Runner>
    </Desktop>
  );
}
